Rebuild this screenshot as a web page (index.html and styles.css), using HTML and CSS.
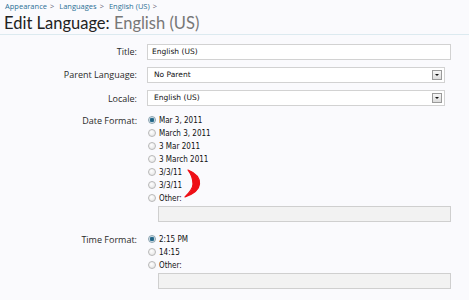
FILE: index.html
```html
<!DOCTYPE html>
<html>
<head>
<meta charset="utf-8">
<link rel="stylesheet" href="styles.css">
</head>
<body>
<div class="page">
  <div class="crumbs"><a>Appearance</a><span class="sep">&gt;</span><a>Languages</a><span class="sep">&gt;</span><a>English (US)</a><span class="sep">&gt;</span></div>
  <h1 class="title">Edit Language: <span class="muted">English (US)</span></h1>

  <form class="form">
    <div class="row">
      <label class="lbl">Title:</label>
      <div class="ctl"><div class="text-in">English (US)</div></div>
    </div>
    <div class="row">
      <label class="lbl">Parent Language:</label>
      <div class="ctl"><div class="select">No Parent<span class="arrow"></span></div></div>
    </div>
    <div class="row">
      <label class="lbl">Locale:</label>
      <div class="ctl"><div class="select">English (US)<span class="arrow"></span></div></div>
    </div>

    <div class="row group">
      <label class="lbl">Date Format:</label>
      <div class="ctl">
        <ul class="radios">
          <li><span class="radio on"></span>Mar 3, 2011</li>
          <li><span class="radio"></span>March 3, 2011</li>
          <li><span class="radio"></span>3 Mar 2011</li>
          <li><span class="radio"></span>3 March 2011</li>
          <li><span class="radio"></span>3/3/11</li>
          <li><span class="radio"></span>3/3/11</li>
          <li><span class="radio"></span>Other:</li>
        </ul>
        <div class="other-in"></div>
      </div>
    </div>

    <div class="row group time">
      <label class="lbl">Time Format:</label>
      <div class="ctl">
        <ul class="radios">
          <li><span class="radio on"></span>2:15 PM</li>
          <li><span class="radio"></span>14:15</li>
          <li><span class="radio"></span>Other:</li>
        </ul>
        <div class="other-in"></div>
      </div>
    </div>
  </form>

  <svg class="mark" width="26" height="36" viewBox="0 0 26 36">
    <path d="M6,4 C13.5,7 18,12 17.5,18 C17,24 11.5,28 3,31 C7,27 11,23 11,18 C11,13 9,8 6,4 Z" fill="#ee0f16" stroke="#ee0f16" stroke-width="1.2" stroke-linejoin="round"/>
  </svg>
</div>
</body>
</html>
```

FILE: styles.css
```css
html, body {
  margin: 0;
  padding: 0;
  background: #fafafd;
}
.page {
  position: relative;
  width: 469px;
  height: 300px;
  overflow: hidden;
  font-family: "Open Sans", "DejaVu Sans", sans-serif;
  color: #222;
}
.crumbs {
  display: flex;
  padding: 1px 0 0 5px;
  height: 10px;
  font-size: 7.5px;
  line-height: 10px;
  color: #2b7096;
  white-space: nowrap;
}
.crumbs .sep {
  color: #667;
  margin: 0 5px 0 3px;
}
.title {
  margin: 0;
  padding: 1px 0 0 4px;
  height: 22px;
  font-family: Lato, "Open Sans", sans-serif;
  font-size: 16.5px;
  line-height: 22px;
  font-weight: normal;
  color: #222;
  border-bottom: 1px solid #dceaf0;
}
.title .muted {
  color: #777;
}
.form {
  margin: 5px 0 0;
  display: flex;
  flex-direction: column;
}
.row {
  display: flex;
  align-items: center;
  height: 23.25px;
}
.lbl {
  flex: none;
  text-align: right;
  font-size: 9px;
  color: #2a2a2a;
  box-sizing: border-box;
  width: 147px;
  padding-right: 10px;
}
.ctl {
  flex: 1;
}
.text-in, .select {
  box-sizing: border-box;
  height: 16px;
  border: 1px solid #d2d2d2;
  background: #fff;
  font-family: "DejaVu Sans", sans-serif;
  font-size: 7.5px;
  line-height: 14px;
  padding-left: 4px;
  color: #111;
}
.text-in { width: 304px; }
.select {
  width: 298px;
  position: relative;
  padding-left: 6px;
}
.arrow {
  position: absolute;
  right: 2px;
  top: 2px;
  width: 10px;
  height: 10px;
  box-sizing: border-box;
  border: 1px solid #9a9a9a;
  background: linear-gradient(#f6f6f6, #dcdcdc);
}
.arrow::after {
  content: "";
  position: absolute;
  left: 2px;
  top: 3px;
  border-left: 2px solid transparent;
  border-right: 2px solid transparent;
  border-top: 2px solid #111;
}
.group {
  height: auto;
  align-items: flex-start;
  margin-top: 3.75px;
}
.group .lbl {
  line-height: 13px;
}
.time {
  margin-top: 11px;
}
.radios {
  list-style: none;
  margin: 0;
  padding: 0;
}
.radios li {
  height: 13px;
  line-height: 13px;
  font-family: "DejaVu Sans Condensed", "DejaVu Sans", sans-serif;
  font-size: 8px;
  color: #111;
  display: flex;
  align-items: center;
}
.radio {
  width: 8px;
  height: 8px;
  box-sizing: border-box;
  border-radius: 50%;
  border: 1px solid #b8b8b8;
  background: radial-gradient(circle at 40% 35%, #fff, #e0e0e0);
  margin: 0 3px 0 1px;
  position: relative;
}
.radio.on {
  border-color: #8aa3b0;
  background: radial-gradient(circle, #1e5a78 0, #2a7194 2px, #dfe8ee 2.6px, #cfd8de 100%);
}
.other-in {
  box-sizing: border-box;
  margin: 1px 0 0 11px;
  width: 293px;
  height: 16px;
  border: 1px solid #cfcfcf;
  background: #f2f2f2;
}
.mark {
  position: absolute;
  left: 182px;
  top: 166px;
}
```
